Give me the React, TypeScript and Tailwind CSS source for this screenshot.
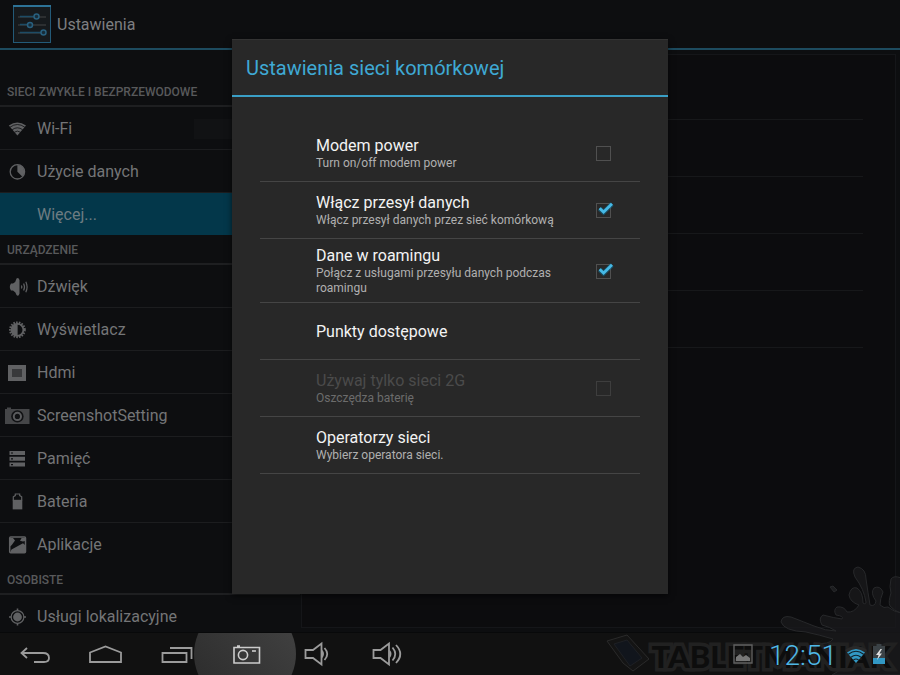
import React, { useState } from "react";

type IconName =
  | "wifi" | "data" | "none" | "sound" | "display" | "hdmi"
  | "camera" | "storage" | "battery" | "apps" | "location";

function RowIcon({ name }: { name: IconName }) {
  const common = "h-6 w-6 shrink-0 overflow-visible fill-current text-[#606163]";
  switch (name) {
    case "wifi":
      return (
        <svg viewBox="0 0 24 24" className={common}>
          <path d="M12.4 18.5 L3.8 8.6 Q12.4 2.4 21 8.6 Z" />
          <path d="M5 10.2 Q12.4 4.8 19.8 10.2 M7.2 12.7 Q12.4 8.9 17.6 12.7 M9.4 15.2 Q12.4 13 15.4 15.2" fill="none" stroke="#0d0e10" strokeWidth="0.8" />
        </svg>
      );
    case "data":
      return (
        <svg viewBox="0 0 24 24" className={common}>
          <circle cx="12.4" cy="11.8" r="7.2" fill="none" stroke="currentColor" strokeWidth="1.3" />
          <path d="M12.4 5 A6.8 6.8 0 0 1 17.2 16.6 L12.4 11.8 Z" />
        </svg>
      );
    case "sound":
      return (
        <svg viewBox="0 0 24 24" className={common}>
          <path d="M6 8.5 H8 Q11 7 11.5 3.5 Q13.5 2 14.5 5 V18.5 Q13.5 22 11.5 20 Q11 17 8 15.5 H6 Q3.6 12 6 8.5 Z" />
          <path d="M16.4 10.5 Q17.4 12 16.4 13.5 M18.6 8.5 Q20.4 12 18.6 15.5 M20.8 6.8 Q23.4 12 20.8 17.2" fill="none" stroke="currentColor" strokeWidth="1.2" />
        </svg>
      );
    case "display":
      return (
        <svg viewBox="0 0 24 24" className={common}>
          <circle cx="12.4" cy="11.8" r="7.2" fill="none" stroke="currentColor" strokeWidth="2.4" strokeDasharray="1.6 1.1" />
          <circle cx="12.4" cy="11.8" r="6" fill="none" stroke="currentColor" strokeWidth="1.8" />
          <path d="M12.6 5.4 A6.4 6.4 0 0 0 12.6 18.2 Z" />
        </svg>
      );
    case "hdmi":
      return (
        <svg viewBox="0 0 24 24" className={common}>
          <path d="M3 4 H21 V20 H3 Z" />
          <path d="M7 8 H17 V16 H7 Z" fill="#38393b" />
        </svg>
      );
    case "camera":
      return (
        <svg viewBox="0 0 24 24" className="h-6 w-6 shrink-0 overflow-visible fill-current text-[#454648]">
          <path d="M0 5 H2 V3.5 H6 V5 H24.5 V20 H0 Z" />
          <circle cx="12.4" cy="12.4" r="6.2" fill="#111214" />
          <circle cx="12.4" cy="12.4" r="3.6" fill="none" stroke="#5a5b5d" strokeWidth="2" />
        </svg>
      );
    case "storage":
      return (
        <svg viewBox="0 0 24 24" className={common}>
          <path d="M4.5 4 H20 V8 H4.5 Z M4.5 9.8 H20 V13.8 H4.5 Z M4.5 15.6 H20 V19.6 H4.5 Z" />
          <path d="M6 6 H8 M6 11.8 H8 M6 17.6 H8" stroke="#0d0e10" strokeWidth="1.2" />
        </svg>
      );
    case "battery":
      return (
        <svg viewBox="0 0 24 24" className={common}>
          <path d="M8.3 10.5 V6.8 L10.3 5.6 V4 H14.7 V5.6 L16.7 6.8 V10.5" fill="none" stroke="currentColor" strokeWidth="1.2" />
          <path d="M7.7 9.8 H17.3 V19.4 H7.7 Z" />
        </svg>
      );
    case "apps":
      return (
        <svg viewBox="0 0 24 24" className={common}>
          <rect x="4.7" y="4" width="15.8" height="15.8" rx="1" fill="none" stroke="currentColor" strokeWidth="1.5" />
          <path d="M5 19.5 L6.5 16.5 L18 10.2 L20 12 V19.5 Z M5 5 H8 L10 7.6 L6.8 12 L5 13.5 Z M20 5 H16.6 L15 7.8 L18 8.6 L20 8 Z" />
        </svg>
      );
    case "location":
      return (
        <svg viewBox="0 0 24 24" className={common}>
          <circle cx="12.5" cy="12" r="4.4" />
          <circle cx="12.5" cy="12" r="6.4" fill="none" stroke="currentColor" strokeWidth="1.2" />
          <path d="M12.5 3.4 V6 M12.5 18 V20.6 M4 12 H6.5 M18.5 12 H21" stroke="currentColor" strokeWidth="1.6" />
        </svg>
      );
    default:
      return <span className="h-6 w-6 shrink-0" />;
  }
}

const sections: { title: string; items: { icon: IconName; label: string; active?: boolean }[] }[] = [
  {
    title: "SIECI ZWYKŁE I BEZPRZEWODOWE",
    items: [
      { icon: "wifi", label: "Wi-Fi" },
      { icon: "data", label: "Użycie danych" },
      { icon: "none", label: "Więcej...", active: true },
    ],
  },
  {
    title: "URZĄDZENIE",
    items: [
      { icon: "sound", label: "Dźwięk" },
      { icon: "display", label: "Wyświetlacz" },
      { icon: "hdmi", label: "Hdmi" },
      { icon: "camera", label: "ScreenshotSetting" },
      { icon: "storage", label: "Pamięć" },
      { icon: "battery", label: "Bateria" },
      { icon: "apps", label: "Aplikacje" },
    ],
  },
  { title: "OSOBISTE", items: [{ icon: "location", label: "Usługi lokalizacyjne" }] },
];

function Sidebar() {
  return (
    <nav className="w-[300px] shrink-0 overflow-hidden pt-7">
      {sections.map((section) => (
        <section key={section.title}>
          <h2 className="flex h-[29px] items-center border-b-2 border-[#1e1f21] px-[7px] text-xs font-medium text-[#58595b]">
            {section.title}
          </h2>
          <ul>
            {section.items.map((item) => (
              <li key={item.label} className="border-b border-[#1c1d1f] last:border-[#0d0e10]">
                <a
                  href="#"
                  className={
                    item.active
                      ? "flex h-[42px] items-center gap-2 bg-[#03374a] px-[5px] pt-px text-base text-[#6d7c82]"
                      : "flex h-[42px] items-center gap-2 px-[5px] pt-px text-base text-[#747577]"
                  }
                >
                  <RowIcon name={item.icon} />
                  <span className="grow">{item.label}</span>
                  {item.icon === "wifi" && <span className="mr-9 h-5 w-[65px] bg-[#111214]" />}
                </a>
              </li>
            ))}
          </ul>
        </section>
      ))}
    </nav>
  );
}

type Preference = { id: string; title: string; summary?: string; checkbox?: boolean; checked?: boolean; disabled?: boolean };

const preferences: Preference[] = [
  { id: "modem", title: "Modem power", summary: "Turn on/off modem power", checkbox: true },
  { id: "data", title: "Włącz przesył danych", summary: "Włącz przesył danych przez sieć komórkową", checkbox: true, checked: true },
  { id: "roaming", title: "Dane w roamingu", summary: "Połącz z usługami przesyłu danych podczas roamingu", checkbox: true, checked: true },
  { id: "apn", title: "Punkty dostępowe" },
  { id: "only2g", title: "Używaj tylko sieci 2G", summary: "Oszczędza baterię", checkbox: true, disabled: true },
  { id: "operators", title: "Operatorzy sieci", summary: "Wybierz operatora sieci." },
];

function PreferenceRow({ pref }: { pref: Preference }) {
  const [checked, setChecked] = useState(!!pref.checked);
  const text = (
    <span className="block w-[260px]">
      <span className={pref.disabled ? "block text-base leading-5 text-[#4b4b4b]" : "block text-base leading-5 text-[#f3f3f3]"}>
        {pref.title}
      </span>
      {pref.summary && (
        <span className={pref.disabled ? "block text-xs leading-[15px] text-[#6c6c6c]" : "block text-xs leading-[15px] text-[#b0b0b0]"}>
          {pref.summary}
        </span>
      )}
    </span>
  );
  const row = "flex min-h-14 w-full items-center pt-[7px] pb-[6px] pl-14 text-left";
  return (
    <li className="border-b border-[#454545]">
      {pref.checkbox ? (
        <label htmlFor={pref.id} className={row}>
          {text}
          <span className="relative ml-5 h-[15px] w-[15px]">
            <input
              id={pref.id}
              type="checkbox"
              checked={checked}
              disabled={pref.disabled}
              onChange={(e) => setChecked(e.target.checked)}
              className="block h-[15px] w-[15px] appearance-none border border-[#505050] disabled:border-[#3e3e3e]"
            />
            {checked && (
              <svg viewBox="0 0 20 16" className="pointer-events-none absolute -top-1 left-0 h-4 w-5 overflow-visible">
                <path d="M3.6 9.6 L7.6 13.2 L16 5" fill="none" stroke="#0b6f96" strokeWidth="4.8" opacity="0.5" />
                <path d="M3.6 9.2 L7.6 13 L16 4.8" fill="none" stroke="#46b9e6" strokeWidth="2.8" />
              </svg>
            )}
          </span>
        </label>
      ) : (
        <button type="button" className={row}>{text}</button>
      )}
    </li>
  );
}

function NetworkDialog() {
  return (
    <div className="absolute inset-x-0 top-0 bottom-[42px] flex items-center justify-center">
      <div
        role="dialog"
        aria-labelledby="dialog-title"
        className="w-[436px] border-t border-[#333333] bg-[#282828] pb-[120px] shadow-[0_2px_6px_rgba(0,0,0,0.6)]"
      >
        <h2 id="dialog-title" className="flex h-[57px] items-center border-b-2 border-[#3a9fc6] px-[14px] text-xl text-[#3fa9d4]">
          Ustawienia sieci komórkowej
        </h2>
        <ul className="mx-7 pt-7">
          {preferences.map((pref) => (
            <PreferenceRow key={pref.id} pref={pref} />
          ))}
        </ul>
      </div>
    </div>
  );
}

function Watermark() {
  return (
    <div aria-hidden="true" className="pointer-events-none absolute right-0 bottom-0 h-[110px] w-[296px]">
      <svg viewBox="0 0 296 110" className="absolute inset-0 h-full w-full">
        <path
          d="M297 48 Q290 46 286 41 Q284 37 287 28 Q285 22 287 14 Q290 10 297 13 V110 H228 Q242 104 234 92 L224 88 Q226 82 210 78 Q226 80 229 74 Q216 70 202 67 Q180 66 177 57 Q178 50 187 52 Q200 57 210 61 Q222 66 232 66 Q226 62 218 60 Q214 53 219 50 Q230 53 238 54 Q240 51 232 50 Q229 45 233 42 Q240 41 243 47 Q250 48 255 40 Q246 37 245 30 Q247 21 253 23 Q259 27 259 38 Q262 40 262 37 Q260 24 251 12 Q247 3 254 2 Q262 4 262 14 Q264 28 266 40 Q271 42 272 36 Q266 28 270 23 Q276 20 279 27 Q276 34 276 40 Q280 44 284 42 Q290 47 297 48 Z"
          fill="#1a1a1c"
          fillOpacity="0.75"
          stroke="#27282a"
        />
        <path d="M226 22 L229 21 L233 25 L230 27 Z" fill="#1c1d1f" stroke="#27282a" />
        <path d="M3 76 L23 70 L45 94 L29 106 L19 98 Z" fill="#141414" stroke="#2a2a2a" />
        <path d="M10 79 L23 75 L38 93 L26 101 Z" fill="#11151c" stroke="#1e2024" />
      </svg>
      <span className="absolute right-[9px] bottom-[1px] font-['Lato'] text-[31px] leading-9 font-black text-[#0d0d0d] [-webkit-text-stroke:7px_#212121] [paint-order:stroke_fill]">
        TABLETMANIAK
      </span>
    </div>
  );
}

const navButtons: { label: string; shape: React.ReactNode; active?: boolean }[] = [
  { label: "Wstecz", shape: <path d="M12 7 L6.5 12 L12 17 M7 12 H28 Q34 12 34 17 Q34 21 29 21 H19" /> },
  { label: "Ekran główny", shape: <path d="M5 21 V11.5 L20.5 5.5 L36 11.5 V21 Z" /> },
  { label: "Ostatnie", shape: <path d="M7.5 12 H31.5 V21 H7.5 Z M15 7 H36.5 V18" /> },
  {
    label: "Zrzut ekranu",
    active: true,
    shape: (
      <>
        <path d="M9 6.5 H34.5 V22 H9 Z M12 5 H15" />
        <circle cx="18" cy="14" r="4.6" />
        <path d="M27 10 H31" />
      </>
    ),
  },
  {
    label: "Ciszej",
    shape: (
      <>
        <path d="M10.5 9 H18 L26.5 2.5 V23.5 L18 17 H10.5 Z M29.5 7 Q35 13 29.5 19" />
        <path d="M27 8.5 Q31 13 27 17.5 Z" className="fill-[#9b9b9b] stroke-none" />
      </>
    ),
  },
  {
    label: "Głośniej",
    shape: (
      <>
        <path d="M8.5 9 H15.5 L24 2.5 V23.5 L15.5 17 H8.5 Z M27.5 6.5 Q33 13 27.5 19.5 M31 4 Q39.5 13 31 22" />
        <path d="M24.5 8.5 Q28.5 13 24.5 17.5 Z" className="fill-[#9b9b9b] stroke-none" />
      </>
    ),
  },
];

function SystemBar() {
  return (
    <footer className="relative flex h-[43px] shrink-0 items-center justify-between overflow-hidden border-t border-[#08090a] bg-[#111111]">
      <div className="flex h-full">
        {navButtons.map((b) => (
          <button key={b.label} type="button" aria-label={b.label} className="relative flex h-full w-[70px] items-center justify-center">
            {b.active && (
              <span className="absolute top-1/2 left-1/2 h-[102px] w-[102px] -translate-x-1/2 -translate-y-1/2 rounded-full bg-linear-to-tr from-[#2a2a2a] to-[#444444]" />
            )}
            <svg
              viewBox="0 0 41 26"
              className={
                b.active
                  ? "relative h-[26px] w-[41px] fill-none stroke-[#cccccc] stroke-[1.6]"
                  : "relative h-[26px] w-[41px] fill-none stroke-[#9b9b9b] stroke-[1.8]"
              }
            >
              {b.shape}
            </svg>
          </button>
        ))}
      </div>
    </footer>
  );
}

function StatusArea() {
  return (
    <div className="absolute right-0 bottom-0 flex h-[42px] items-center pr-[15px]">
      <svg viewBox="0 0 20 20" className="h-5 w-5 fill-none stroke-[#5f5f5f]">
        <path d="M1 1 H19 V19 H1 Z" strokeWidth="1.4" />
        <path d="M3 17 V13 L7 10 L10 13 L13 11 L17 14 V17 Z" fill="#777777" stroke="none" />
      </svg>
      <time className="mt-1 ml-4 text-[28px] leading-8 font-light text-[#4fb8e6]">12:51</time>
      <svg viewBox="0 0 22 18" className="ml-2 h-[18px] w-[22px]">
        <path d="M11 18 L0 5 Q11 -3 22 5 Z" fill="#292929" />
        <path d="M11 18 L2 7.5 Q11 0.5 20 7.5 Z" fill="#3298c4" />
        <path d="M3.4 9.2 Q11 3.4 18.6 9.2 M6 12.2 Q11 8.2 16 12.2 M8.4 15 Q11 13 13.6 15" fill="none" stroke="#10212a" strokeWidth="1.1" />
      </svg>
      <svg viewBox="0 0 12 20" className="ml-1.5 h-5 w-3">
        <path d="M3.5 0 H8.5 V2 H12 V20 H0 V2 H3.5 Z" fill="#3b4246" />
        <path d="M0 14 H12 V20 H0 Z" fill="#3298c4" />
        <path d="M7.5 5 L3 11 H5.6 L4 16 L9 9.6 H6.4 L9 5 Z" fill="#e2e2e2" />
      </svg>
    </div>
  );
}

export default function App() {
  return (
    <div className="relative flex h-screen flex-col overflow-hidden bg-[#0d0e10] font-['Roboto','Liberation_Sans',sans-serif]">
      <header className="flex h-[50px] shrink-0 items-center gap-[5px] border-b-2 border-[#1d4b5f] pl-3 text-[#7d7e80]">
        <svg viewBox="0 0 40 40" className="h-10 w-10">
          <rect x="1.5" y="1.5" width="37" height="37" fill="#161a1d" stroke="#235a78" />
          <path d="M1 2 H39" stroke="#2d7296" strokeWidth="2" />
          <path d="M6 13 H34 M6 21 H34 M6 29 H34" stroke="#2c2f31" strokeWidth="2" />
          <path d="M8 12.5 H22 M8 20.5 H15 M8 28.5 H29" stroke="#1d4c66" strokeWidth="1.5" />
          <g fill="#172c38" stroke="#28607f" strokeWidth="1.5">
            <circle cx="24.5" cy="12.5" r="2.5" />
            <circle cx="18" cy="21" r="2.5" />
            <circle cx="31.5" cy="28.5" r="2.5" />
          </g>
        </svg>
        <h1 className="pt-0.5 text-base">Ustawienia</h1>
      </header>
      <div className="flex min-h-0 flex-1">
        <Sidebar />
        <main className="mt-1 mr-1 mb-1 ml-px flex-1 border border-[#151619] bg-[#0c0c0e] px-8 pt-2">
          <ul>
            {["a", "b", "c", "d", "e"].map((key) => (
              <li key={key} className="h-[57px] border-b border-[#17181a]" />
            ))}
          </ul>
        </main>
      </div>
      <SystemBar />
      <NetworkDialog />
      <Watermark />
      <StatusArea />
    </div>
  );
}
